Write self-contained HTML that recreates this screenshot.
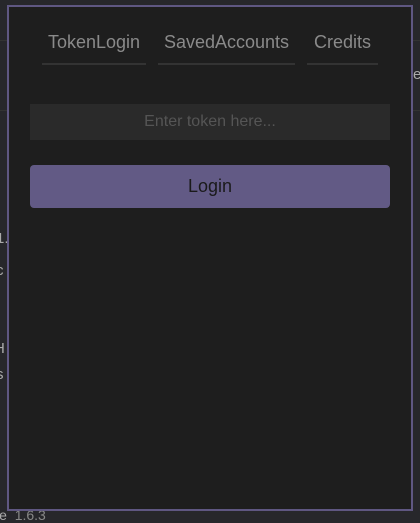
<!DOCTYPE html>
<html><head><style>
html,body{margin:0;padding:0;width:420px;height:520px;overflow:hidden;background:#27272b;font-family:"Liberation Sans",sans-serif;}
.bg{position:absolute;color:#aaa;font-size:15px;}
.panel{position:absolute;left:7px;top:5px;width:402px;height:502px;border:2px solid #5f5782;background:#1e1e1e;}
.tab{position:absolute;top:24px;height:32px;color:#8a8a8a;font-size:18px;text-align:center;border-bottom:2px solid #333;line-height:22px;}
.input{position:absolute;left:21px;top:97px;width:360px;height:36px;background:#2a2a2a;color:#555;font-size:16px;text-align:center;line-height:36px;}
.btn{position:absolute;left:21px;top:158px;width:360px;height:43px;background:#625a85;border-radius:4px;color:#1a1a1a;font-size:18px;text-align:center;line-height:43px;}
</style></head><body>
<div style="position:absolute;left:0;top:40px;width:420px;height:1px;background:#333"></div>
<div style="position:absolute;left:0;top:110px;width:420px;height:1px;background:#333"></div>
<div class="bg" style="left:413px;top:66px">e</div>
<div class="bg" style="left:-4px;top:230px">1.</div>
<div class="bg" style="left:-4px;top:262px">c</div>
<div class="bg" style="left:-6px;top:340px">H</div>
<div class="bg" style="left:-4px;top:366px">s</div>
<div class="bg" style="left:-4px;top:507px;font-size:14px">ie&nbsp; <span style="color:#888">1.6.3</span></div>
<div class="panel">
<div class="tab" style="left:33px;width:104px">TokenLogin</div>
<div class="tab" style="left:149px;width:137px">SavedAccounts</div>
<div class="tab" style="left:298px;width:71px">Credits</div>
<div class="input">Enter token here...</div>
<div class="btn">Login</div>
</div>
</body></html>
